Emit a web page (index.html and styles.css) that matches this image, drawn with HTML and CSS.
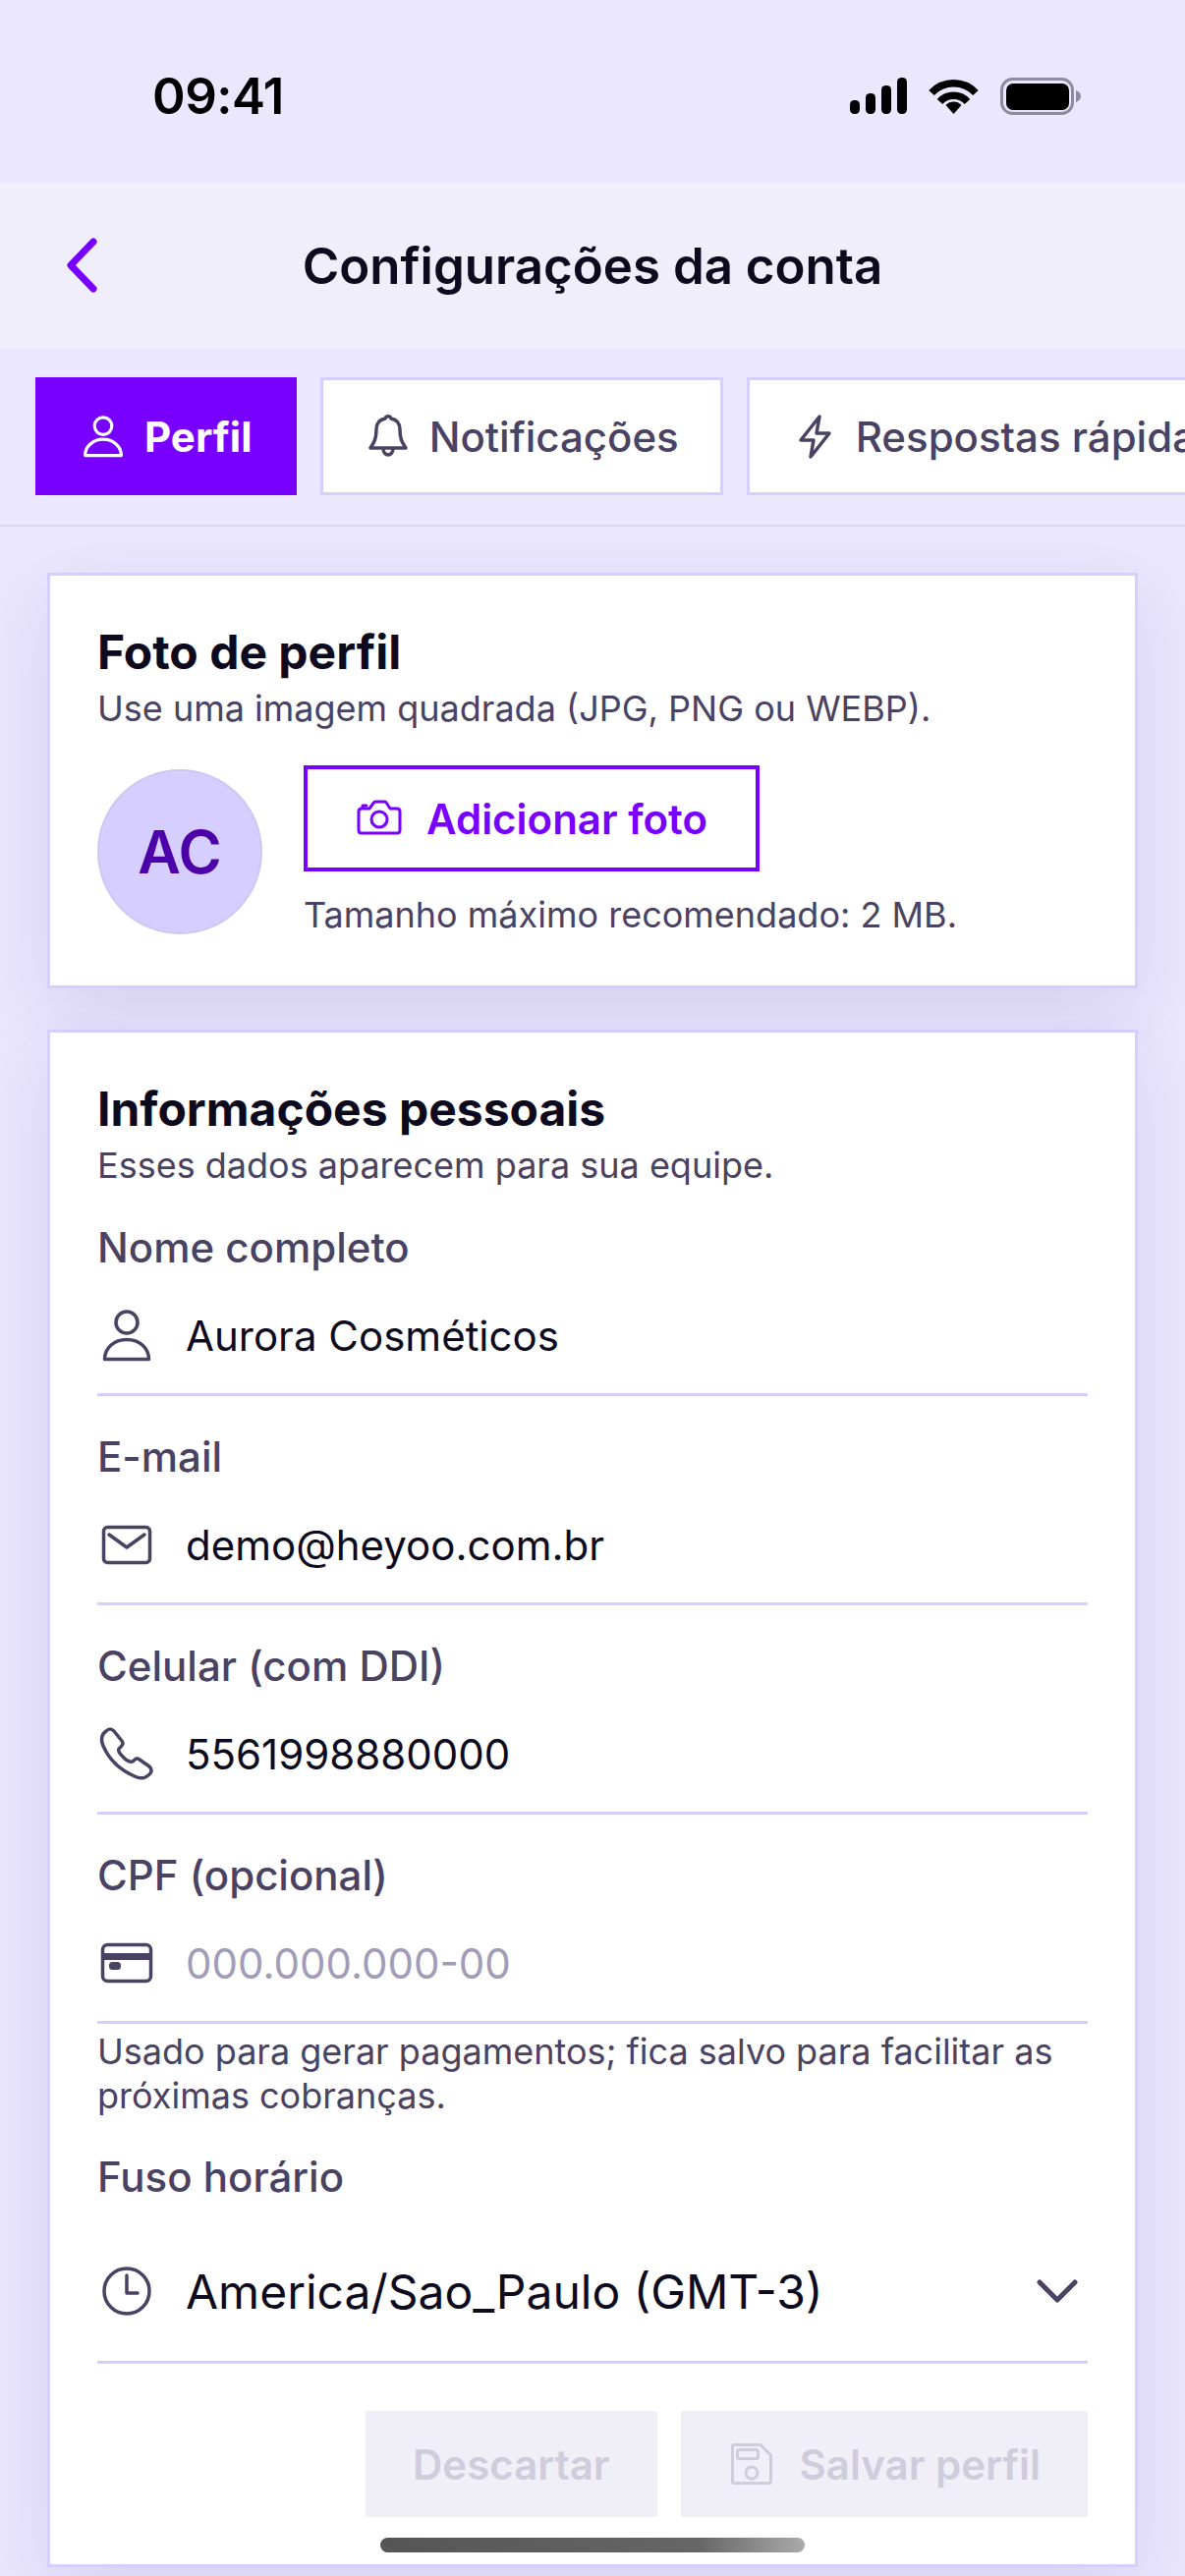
FILE: index.html
```html
<!DOCTYPE html>
<html lang="pt-br">
<head>
    <meta charset="UTF-8">
    <meta name="viewport" content="width=device-width, initial-scale=1.0">
    <title>Configurações da conta</title>
    <link rel="stylesheet" href="styles.css">
</head>
<body>
    <!-- Barra de status -->
    <div class="status-bar">
        <span class="status-time">09:41</span>
        <div class="status-icons">
            <svg width="58" height="37" viewBox="0 0 58 37" fill="#000">
                <rect x="0" y="23" width="10" height="14" rx="4.5"/>
                <rect x="16" y="16" width="10" height="21" rx="4.5"/>
                <rect x="32" y="8" width="10" height="29" rx="4.5"/>
                <rect x="48" y="0" width="10" height="37" rx="4.5"/>
            </svg>
            <svg width="51" height="37" viewBox="0 0 51 37" fill="none" stroke="#000" stroke-width="7.5">
                <path d="M3 15.5 A31 31 0 0 1 48 15.5"/>
                <path d="M11.5 24.5 A19 19 0 0 1 39.5 24.5"/>
                <path d="M25.5 37 L17.5 28 A11 11 0 0 1 33.5 28 Z" fill="#000" stroke="none"/>
            </svg>
            <svg width="82" height="38" viewBox="0 0 82 38">
                <rect x="1.5" y="1.5" width="72" height="35" rx="11" fill="none" stroke="#8f8b9f" stroke-width="3"/>
                <rect x="6" y="6" width="64" height="27" rx="7" fill="#000"/>
                <path d="M77 13 C80 14 82 16 82 19 C82 22 80 24 77 25 Z" fill="#8f8b9f"/>
            </svg>
        </div>
    </div>

    <!-- Cabeçalho -->
    <header class="top-header">
        <a class="back-link" href="#">
            <svg width="40" height="60" viewBox="0 0 40 60" fill="none" stroke="#7700ff" stroke-width="7" stroke-linecap="round" stroke-linejoin="round">
                <path d="M35 6 L12 30 L35 54"/>
            </svg>
        </a>
        <h1>Configurações da conta</h1>
    </header>

    <!-- Abas -->
    <nav class="tabs">
        <a class="tab active" href="#">
            <svg class="tab-icon" viewBox="0 0 60 60"><circle cx="30" cy="17" r="11"/><path d="M7 54.5 C7 43 17 34 30 34 C43 34 53 43 53 54.5 Z"/></svg>
            Perfil
        </a>
        <a class="tab" href="#">
            <svg class="tab-icon" viewBox="0 0 24 24"><path d="M6 8.5 C6 5 8 3.5 10.5 3 C11 1.5 13 1.5 13.5 3 C16 3.5 18 5 18 8.5 C18 14 19.5 15.5 21 18 H3 C4.5 15.5 6 14 6 8.5 Z"/><path d="M9.5 18.5 C9.8 22.5 14.2 22.5 14.5 18.5"/></svg>
            Notificações
        </a>
        <a class="tab" href="#">
            <svg class="tab-icon" viewBox="0 0 24 24"><path d="M14.5 2 L5 14 H11.5 L10 22.5 L19.5 10.5 H13 Z"/></svg>
            Respostas rápidas
        </a>
    </nav>

    <main class="content">
        <!-- Foto de perfil -->
        <section class="card">
            <h2>Foto de perfil</h2>
            <p class="card-sub">Use uma imagem quadrada (JPG, PNG ou WEBP).</p>
            <div class="photo-row">
                <div class="avatar">AC</div>
                <div class="photo-actions">
                    <button class="photo-btn">
                        <svg class="btn-icon" viewBox="0 0 48 48"><path d="M6 14 H14 L18 8.5 C18.5 7.5 19.5 7 20.5 7 H29 C30 7 31 7.5 31.5 8.5 L35 14 H42 C44 14 45 15 45 17 V36 C45 38 44 39 42 39 H6 C4 39 3 38 3 36 V17 C3 15 4 14 6 14 Z"/><circle cx="24" cy="25" r="8"/><path d="M7 13 V11 H11"/></svg>
                        Adicionar foto
                    </button>
                    <p class="photo-hint">Tamanho máximo recomendado: 2 MB.</p>
                </div>
            </div>
        </section>

        <!-- Informações pessoais -->
        <section class="card">
            <h2>Informações pessoais</h2>
            <p class="card-sub">Esses dados aparecem para sua equipe.</p>

            <div class="fields">
                <div class="field">
                    <label>Nome completo</label>
                    <div class="field-row">
                        <svg class="field-icon" viewBox="0 0 60 60"><circle cx="30" cy="17" r="11"/><path d="M7.5 54.5 C7.5 43 17 34.5 30 34.5 C43 34.5 52.5 43 52.5 54.5 Z"/></svg>
                        <span class="field-value">Aurora Cosméticos</span>
                    </div>
                </div>

                <div class="field">
                    <label>E-mail</label>
                    <div class="field-row">
                        <svg class="field-icon" viewBox="0 0 60 60"><rect x="6.5" y="12.5" width="47" height="36" rx="4"/><path d="M12 20 L30 33 L48 20"/></svg>
                        <span class="field-value">demo@heyoo.com.br</span>
                    </div>
                </div>

                <div class="field">
                    <label>Celular (com DDI)</label>
                    <div class="field-row">
                        <svg class="field-icon" viewBox="0 0 60 60"><path d="M9 7 C12 4 15 5 17 7 L25 17 C27 20 26 21 22 25 C21 27 22 29 25 32 L29 36 C32 38 34 39 36 38 C39 35 40 34 43 36 L53 43 C55 45 56 47 54 50 C49 56 44 56 38 53 C22 46 12 36 6 22 C3 15 5 10 9 7 Z"/></svg>
                        <span class="field-value">5561998880000</span>
                    </div>
                </div>

                <div class="field">
                    <label>CPF (opcional)</label>
                    <div class="field-row">
                        <svg class="field-icon" viewBox="0 0 60 60"><rect x="5.5" y="11.5" width="49" height="37" rx="5"/><rect x="5" y="20" width="50" height="7" class="icon-fill"/><rect x="12" y="29" width="12" height="8" rx="3.5" class="icon-fill"/></svg>
                        <span class="field-value placeholder">000.000.000-00</span>
                    </div>
                </div>
                <p class="field-help">Usado para gerar pagamentos; fica salvo para facilitar as próximas cobranças.</p>

                <div class="field field-select">
                    <label>Fuso horário</label>
                    <div class="field-row">
                        <svg class="field-icon" viewBox="0 0 60 60"><circle cx="30" cy="30" r="23"/><path d="M30 14 V32 H41"/></svg>
                        <span class="field-value">America/Sao_Paulo (GMT-3)</span>
                        <svg class="chevron" viewBox="0 0 42 24"><path d="M3 3 L21 21 L39 3"/></svg>
                    </div>
                </div>
            </div>

            <div class="form-actions">
                <button class="btn-disabled">Descartar</button>
                <button class="btn-disabled">
                    <svg class="btn-icon" viewBox="0 0 48 48"><path d="M6 4.5 H33 L43.5 15 V42 C43.5 43 43 43.5 42 43.5 H6 C5 43.5 4.5 43 4.5 42 V6 C4.5 5 5 4.5 6 4.5 Z"/><rect x="9.5" y="9.5" width="21" height="9" rx="2"/><circle cx="24" cy="33" r="6"/></svg>
                    Salvar perfil
                </button>
            </div>
        </section>
    </main>

    <div class="home-indicator"></div>
</body>
</html>
```

FILE: styles.css
```css
* {
    box-sizing: border-box;
}
html, body {
    margin: 0;
    padding: 0;
}
body {
    position: relative;
    width: 1206px;
    height: 2622px;
    overflow: hidden;
    font-family: Inter, "Noto Sans", sans-serif;
    background-color: #ebe7ff;
    color: #0d0a1e;
}
h1, h2, p {
    margin: 0;
}
a {
    text-decoration: none;
}

/* Barra de status */
.status-bar {
    height: 186px;
    padding: 9px 106px 0 155px;
    display: flex;
    justify-content: space-between;
    align-items: center;
}
.status-time {
    font-size: 51px;
    font-weight: 600;
    letter-spacing: -0.5px;
    color: #000;
}
.status-icons {
    display: flex;
    align-items: center;
    gap: 22px;
}

/* Cabeçalho */
.top-header {
    height: 168px;
    background-color: #f0eefa;
    display: grid;
    grid-template-columns: 1fr auto 1fr;
    align-items: center;
    padding: 0 60px;
}
.back-link {
    display: flex;
}
.top-header h1 {
    font-size: 51px;
    font-weight: 600;
    color: #0d0a1e;
}

/* Abas */
.tabs {
    display: flex;
    gap: 24px;
    padding: 30px 0 30px 36px;
    border-bottom: 2px solid #d9d2ff;
    overflow: hidden;
}
.tab {
    flex-shrink: 0;
    height: 120px;
    display: flex;
    align-items: center;
    gap: 18px;
    padding: 0 42px;
    background-color: #fff;
    border: 3px solid #d6ceff;
    color: #4a4262;
    font-size: 42px;
    font-weight: 500;
}
.tab.active {
    background-color: #7700ff;
    border-color: #7700ff;
    color: #fff;
    font-weight: 700;
}
.tab-icon {
    width: 48px;
    height: 48px;
    fill: none;
    stroke: currentColor;
    stroke-width: 1.75;
    stroke-linecap: round;
    stroke-linejoin: round;
}
.tab.active .tab-icon {
    stroke-width: 4;
}

/* Cartões */
.content {
    padding: 47px 48px 0;
    display: flex;
    flex-direction: column;
    gap: 42px;
}
.card {
    background-color: #fff;
    border: 3px solid #d6ceff;
    padding: 48px;
    box-shadow: 0 24px 72px rgba(50, 30, 130, 0.11);
}
.card h2 {
    font-size: 48px;
    font-weight: 700;
    line-height: 60px;
}
.card-sub {
    margin-top: 3px;
    font-size: 36px;
    line-height: 48px;
    color: #4a4262;
}

/* Foto */
.photo-row {
    margin-top: 34px;
    display: flex;
    align-items: center;
    gap: 42px;
}
.avatar {
    width: 168px;
    height: 168px;
    border-radius: 50%;
    background-color: #d6ceff;
    border: 2px solid #cfc7f2;
    color: #4c00a8;
    font-size: 60px;
    font-weight: 600;
    display: flex;
    align-items: center;
    justify-content: center;
}
.photo-btn {
    height: 108px;
    display: flex;
    align-items: center;
    gap: 24px;
    padding: 0 49px;
    background-color: #fff;
    border: 4px solid #7700ff;
    color: #7700ff;
    font-family: inherit;
    font-size: 42px;
    font-weight: 600;
}
.btn-icon {
    width: 48px;
    height: 48px;
    fill: none;
    stroke: currentColor;
    stroke-width: 3;
    stroke-linecap: round;
    stroke-linejoin: round;
}
.photo-hint {
    margin-top: 20px;
    font-size: 36px;
    line-height: 48px;
    color: #4a4262;
}

/* Campos */
.fields {
    margin-top: 36px;
    display: flex;
    flex-direction: column;
    gap: 38px;
}
.field label {
    display: block;
    font-size: 42px;
    font-weight: 500;
    line-height: 48px;
    color: #4a4262;
}
.field-row {
    margin-top: 6px;
    height: 121px;
    display: flex;
    align-items: center;
    gap: 30px;
    border-bottom: 3px solid #d6ceff;
}
.field-icon {
    flex-shrink: 0;
    width: 60px;
    height: 60px;
    fill: none;
    stroke: #4a4262;
    stroke-width: 3.5;
    stroke-linecap: round;
    stroke-linejoin: round;
}
.field-icon .icon-fill {
    fill: #4a4262;
    stroke: none;
}
.field-value {
    flex: 1;
    font-size: 42px;
}
.field-value.placeholder {
    color: #a19cb8;
}
.field-help {
    margin-top: -32px;
    margin-bottom: -2px;
    font-size: 36px;
    line-height: 45px;
    color: #4a4262;
}
.field-select .field-row {
    margin-top: 21px;
    height: 145px;
}
.field-select .field-value {
    font-size: 48px;
}
.chevron {
    width: 42px;
    height: 24px;
    margin-right: 10px;
    fill: none;
    stroke: #4a4262;
    stroke-width: 5;
    stroke-linecap: round;
    stroke-linejoin: round;
}

/* Botões do formulário */
.form-actions {
    margin-top: 48px;
    display: flex;
    justify-content: flex-end;
    gap: 24px;
}
.btn-disabled {
    height: 108px;
    display: flex;
    align-items: center;
    gap: 25px;
    padding: 0 48px;
    background-color: #f0eff7;
    border: none;
    color: #cfccdc;
    font-family: inherit;
    font-size: 42px;
    font-weight: 600;
}

/* Indicador inferior */
.home-indicator {
    position: absolute;
    left: 387px;
    top: 2583px;
    width: 432px;
    height: 15px;
    border-radius: 8px;
    background: linear-gradient(90deg, #555 0%, #666 75%, #aaa 100%);
}
```
